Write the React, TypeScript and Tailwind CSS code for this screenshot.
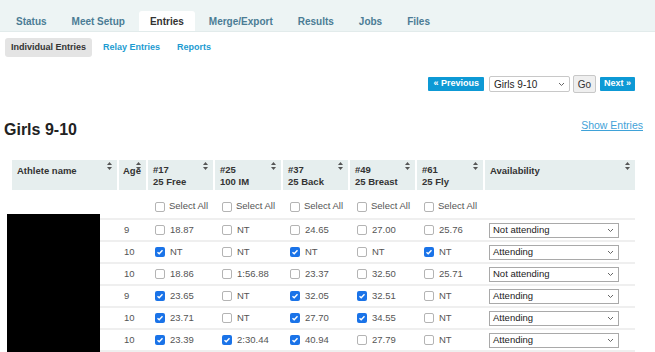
import React from 'react';

const tabs = ['Status', 'Meet Setup', 'Entries', 'Merge/Export', 'Results', 'Jobs', 'Files'];

const events = [
  { num: '#17', name: '25 Free' },
  { num: '#25', name: '100 IM' },
  { num: '#37', name: '25 Back' },
  { num: '#49', name: '25 Breast' },
  { num: '#61', name: '25 Fly' },
];

type Entry = [boolean, string];

const rows: { age: string; entries: Entry[]; status: string }[] = [
  { age: '9', entries: [[false, '18.87'], [false, 'NT'], [false, '24.65'], [false, '27.00'], [false, '25.76']], status: 'Not attending' },
  { age: '10', entries: [[true, 'NT'], [false, 'NT'], [true, 'NT'], [false, 'NT'], [true, 'NT']], status: 'Attending' },
  { age: '10', entries: [[false, '18.86'], [false, '1:56.88'], [false, '23.37'], [false, '32.50'], [false, '25.71']], status: 'Not attending' },
  { age: '9', entries: [[true, '23.65'], [false, 'NT'], [true, '32.05'], [true, '32.51'], [false, 'NT']], status: 'Attending' },
  { age: '10', entries: [[true, '23.71'], [false, 'NT'], [true, '27.70'], [true, '34.55'], [false, 'NT']], status: 'Attending' },
  { age: '10', entries: [[true, '23.39'], [true, '2:30.44'], [true, '40.94'], [false, '27.79'], [false, 'NT']], status: 'Attending' },
];

const cols = 'grid grid-cols-[107px_29px_67px_68px_67px_67px_68px_150px]';

const SortIcon = () => (
  <svg width="5" height="8" viewBox="0 0 5 8" className="absolute top-[2px] right-[5px]">
    <polygon points="2.5,0 5,3 0,3" fill="#555" />
    <polygon points="0,5 5,5 2.5,8" fill="#555" />
  </svg>
);

const Chevron = () => (
  <svg width="7" height="5" viewBox="0 0 7 5">
    <path d="M1 1 L3.5 3.5 L6 1" fill="none" stroke="#666" strokeWidth="1" />
  </svg>
);

const Checkbox = ({ checked }: { checked: boolean }) =>
  checked ? (
    <span className="w-[10px] h-[10px] rounded-[2px] bg-[#1a73e8] flex items-center justify-center shrink-0">
      <svg width="8" height="8" viewBox="0 0 8 8">
        <path d="M1.5 4.2 L3.2 5.8 L6.5 2.2" fill="none" stroke="white" strokeWidth="1.4" />
      </svg>
    </span>
  ) : (
    <span className="w-[10px] h-[10px] rounded-[2px] border border-[#b4b4b4] bg-white shrink-0" />
  );

export default function App() {
  return (
    <div className="relative w-[655px] min-h-[352px] bg-white font-['Liberation_Sans',Arial,sans-serif] overflow-hidden">
      {/* main tabs */}
      <div className="h-8 bg-[#edf4f4] border-b border-[#e2ebeb] flex items-end pl-[5px] gap-[3px]">
        {tabs.map((t) => (
          <div
            key={t}
            className={`h-5 px-[11px] flex items-center text-[10px] font-bold rounded-t-[3px] ${
              t === 'Entries' ? 'bg-white text-[#333]' : 'text-[#4b7c95]'
            }`}
          >
            {t}
          </div>
        ))}
      </div>

      {/* sub tabs */}
      <div className="mt-[6px] pl-[5px] flex items-center gap-[5px] text-[9px] font-bold">
        <div className="h-[19px] px-[6px] flex items-center rounded-[3px] bg-[#e4e4e4] text-[#333]">Individual Entries</div>
        <div className="h-[19px] px-[6px] flex items-center text-[#1d9bd1]">Relay Entries</div>
        <div className="h-[19px] px-[6px] flex items-center text-[#1d9bd1]">Reports</div>
      </div>

      {/* pagination */}
      <div className="mt-[18px] pr-[20px] flex justify-end items-center h-[18px]">
        <div className="h-[14px] px-[5px] flex items-center bg-[#0d99d5] text-white text-[9px] font-bold rounded-[1px]">« Previous</div>
        <div className="ml-[5px] w-[81px] h-[16px] border border-[#c8c8c8] rounded-[2px] flex items-center justify-between pl-[4px] pr-[4px] text-[10px] text-[#222]">
          <span>Girls 9-10</span>
          <Chevron />
        </div>
        <div className="ml-[3px] w-[23px] h-[18px] border border-[#c8c8c8] bg-[#efefef] rounded-[2px] flex items-center justify-center text-[10px] text-[#333]">Go</div>
        <div className="ml-[4px] h-[14px] px-[4px] flex items-center bg-[#0d99d5] text-white text-[9px] font-bold rounded-[1px]">Next »</div>
      </div>

      {/* heading */}
      <div className="mt-[26px] h-5 pl-[4px] pr-[12px] flex justify-between items-start">
        <h2 className="text-[16px] font-bold text-[#222] leading-5 mt-[1px]">Girls 9-10</h2>
        <a className="text-[10.5px] text-[#3fa2d8] underline leading-3">Show Entries</a>
      </div>

      {/* table */}
      <div className="mt-[21px] ml-3 w-[623px] text-[9.5px]">
        <div className={`${cols} h-[30px] bg-[#e6eeee] font-bold text-[#333] leading-[12px]`}>
          <div className="relative px-[5px] pt-[5px] border-r-2 border-white">
            Athlete name
            <SortIcon />
          </div>
          <div className="relative px-[4px] pt-[5px] border-r-2 border-white">
            Age
            <SortIcon />
          </div>
          {events.map((e) => (
            <div key={e.num} className="relative px-[5px] pt-[4px] border-r-2 border-white">
              <div>{e.num}</div>
              <div>{e.name}</div>
              <SortIcon />
            </div>
          ))}
          <div className="relative px-[5px] pt-[5px]">
            Availability
            <SortIcon />
          </div>
        </div>

        <div className={`${cols} h-[30px] pt-[5px] border-b-2 border-[#efefef] items-center text-[#555]`}>
          <div />
          <div />
          {events.map((e) => (
            <div key={e.num} className="pl-[7px] flex items-center gap-[4px]">
              <Checkbox checked={false} />
              <span>Select All</span>
            </div>
          ))}
          <div />
        </div>

        {rows.map((r, i) => (
          <div key={i} className={`${cols} h-[22px] border-b-2 border-[#efefef] items-center text-[#555]`}>
            <div />
            <div className="pl-[5px] self-start pt-[3px]">{r.age}</div>
            {r.entries.map(([c, v], j) => (
              <div key={j} className="pl-[7px] flex items-center gap-[5px]">
                <Checkbox checked={c} />
                <span>{v}</span>
              </div>
            ))}
            <div className="pl-[4px]">
              <div className="w-[130px] h-[15px] border border-[#a9a9a9] flex items-center justify-between pl-[3px] pr-[4px] text-[#222]">
                <span>{r.status}</span>
                <Chevron />
              </div>
            </div>
          </div>
        ))}
      </div>

      {/* redaction */}
      <div className="absolute left-[7px] top-[214px] w-[93px] h-[150px] bg-black" />
    </div>
  );
}
